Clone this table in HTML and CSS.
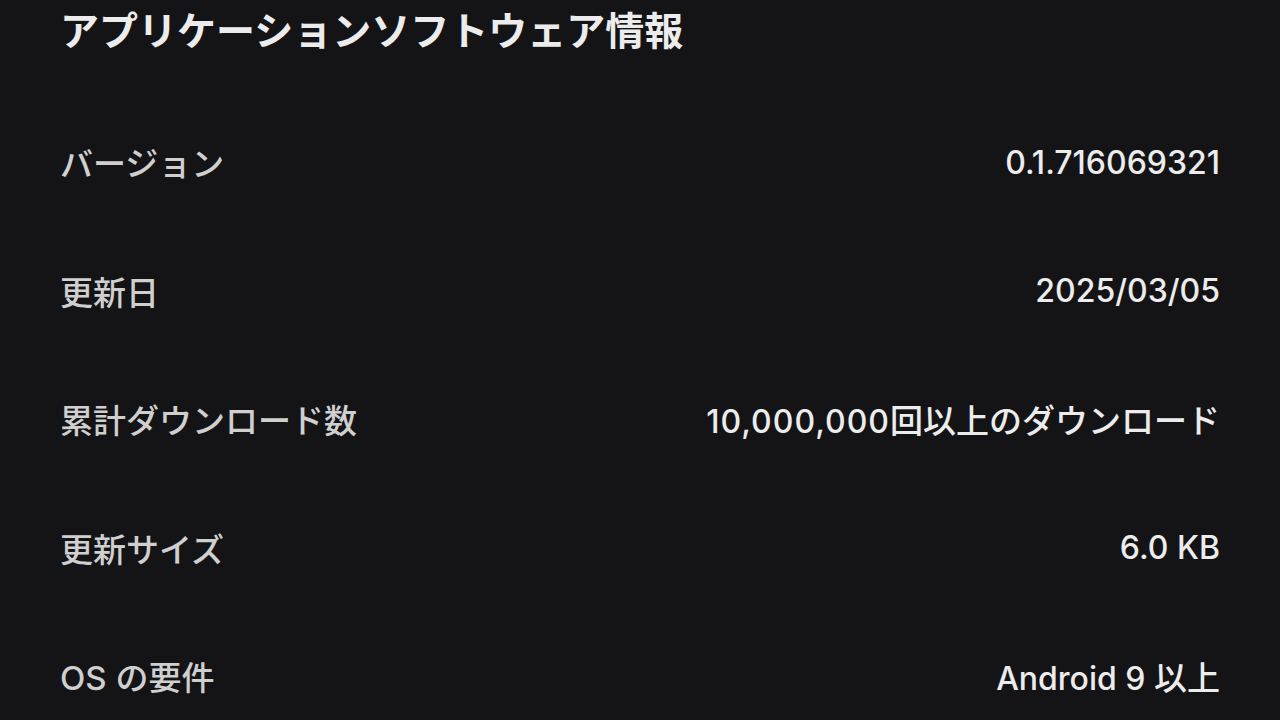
FILE: index.html
```html
<!DOCTYPE html>
<html lang="ja">
<head>
<meta charset="utf-8">
<link rel="stylesheet" href="styles.css">
</head>
<body>
<main class="page">
  <h1 class="title">アプリケーションソフトウェア情報</h1>
  <div class="list">
    <div class="row"><span class="label">バージョン</span><span class="value">0.1.716069321</span></div>
    <div class="row"><span class="label">更新日</span><span class="value">2025/03/05</span></div>
    <div class="row"><span class="label">累計ダウンロード数</span><span class="value"><span class="num">10,000,000</span><span class="ja">回以上のダウンロード</span></span></div>
    <div class="row"><span class="label">更新サイズ</span><span class="value">6.0 KB</span></div>
    <div class="row"><span class="label">OS の要件</span><span class="value">Android 9 <span class="ja">以上</span></span></div>
  </div>
</main>
</body>
</html>
```
FILE: styles.css
```css
html, body {
  margin: 0;
  padding: 0;
  background: #141416;
}
body {
  width: 1280px;
  height: 720px;
  overflow: hidden;
  font-family: Inter, "Noto Sans CJK JP", "Noto Sans", sans-serif;
}
.page {
  padding: 0 60px;
}
.title {
  margin: 0;
  height: 62px;
  line-height: 62px;
  font-size: 39px;
  font-weight: 700;
  color: #ececec;
}
.list {
  margin-top: 36px;
  display: flex;
  flex-direction: column;
}
.row {
  height: 128.5px;
  display: flex;
  align-items: center;
  justify-content: space-between;
}
.label {
  font-size: 33px;
  font-weight: 500;
  color: #cfcfcf;
}
.value {
  font-size: 32px;
  font-weight: 500;
  color: #ececec;
}
.value .ja {
  font-size: 33px;
}
.value .num {
  letter-spacing: 1px;
}
```
